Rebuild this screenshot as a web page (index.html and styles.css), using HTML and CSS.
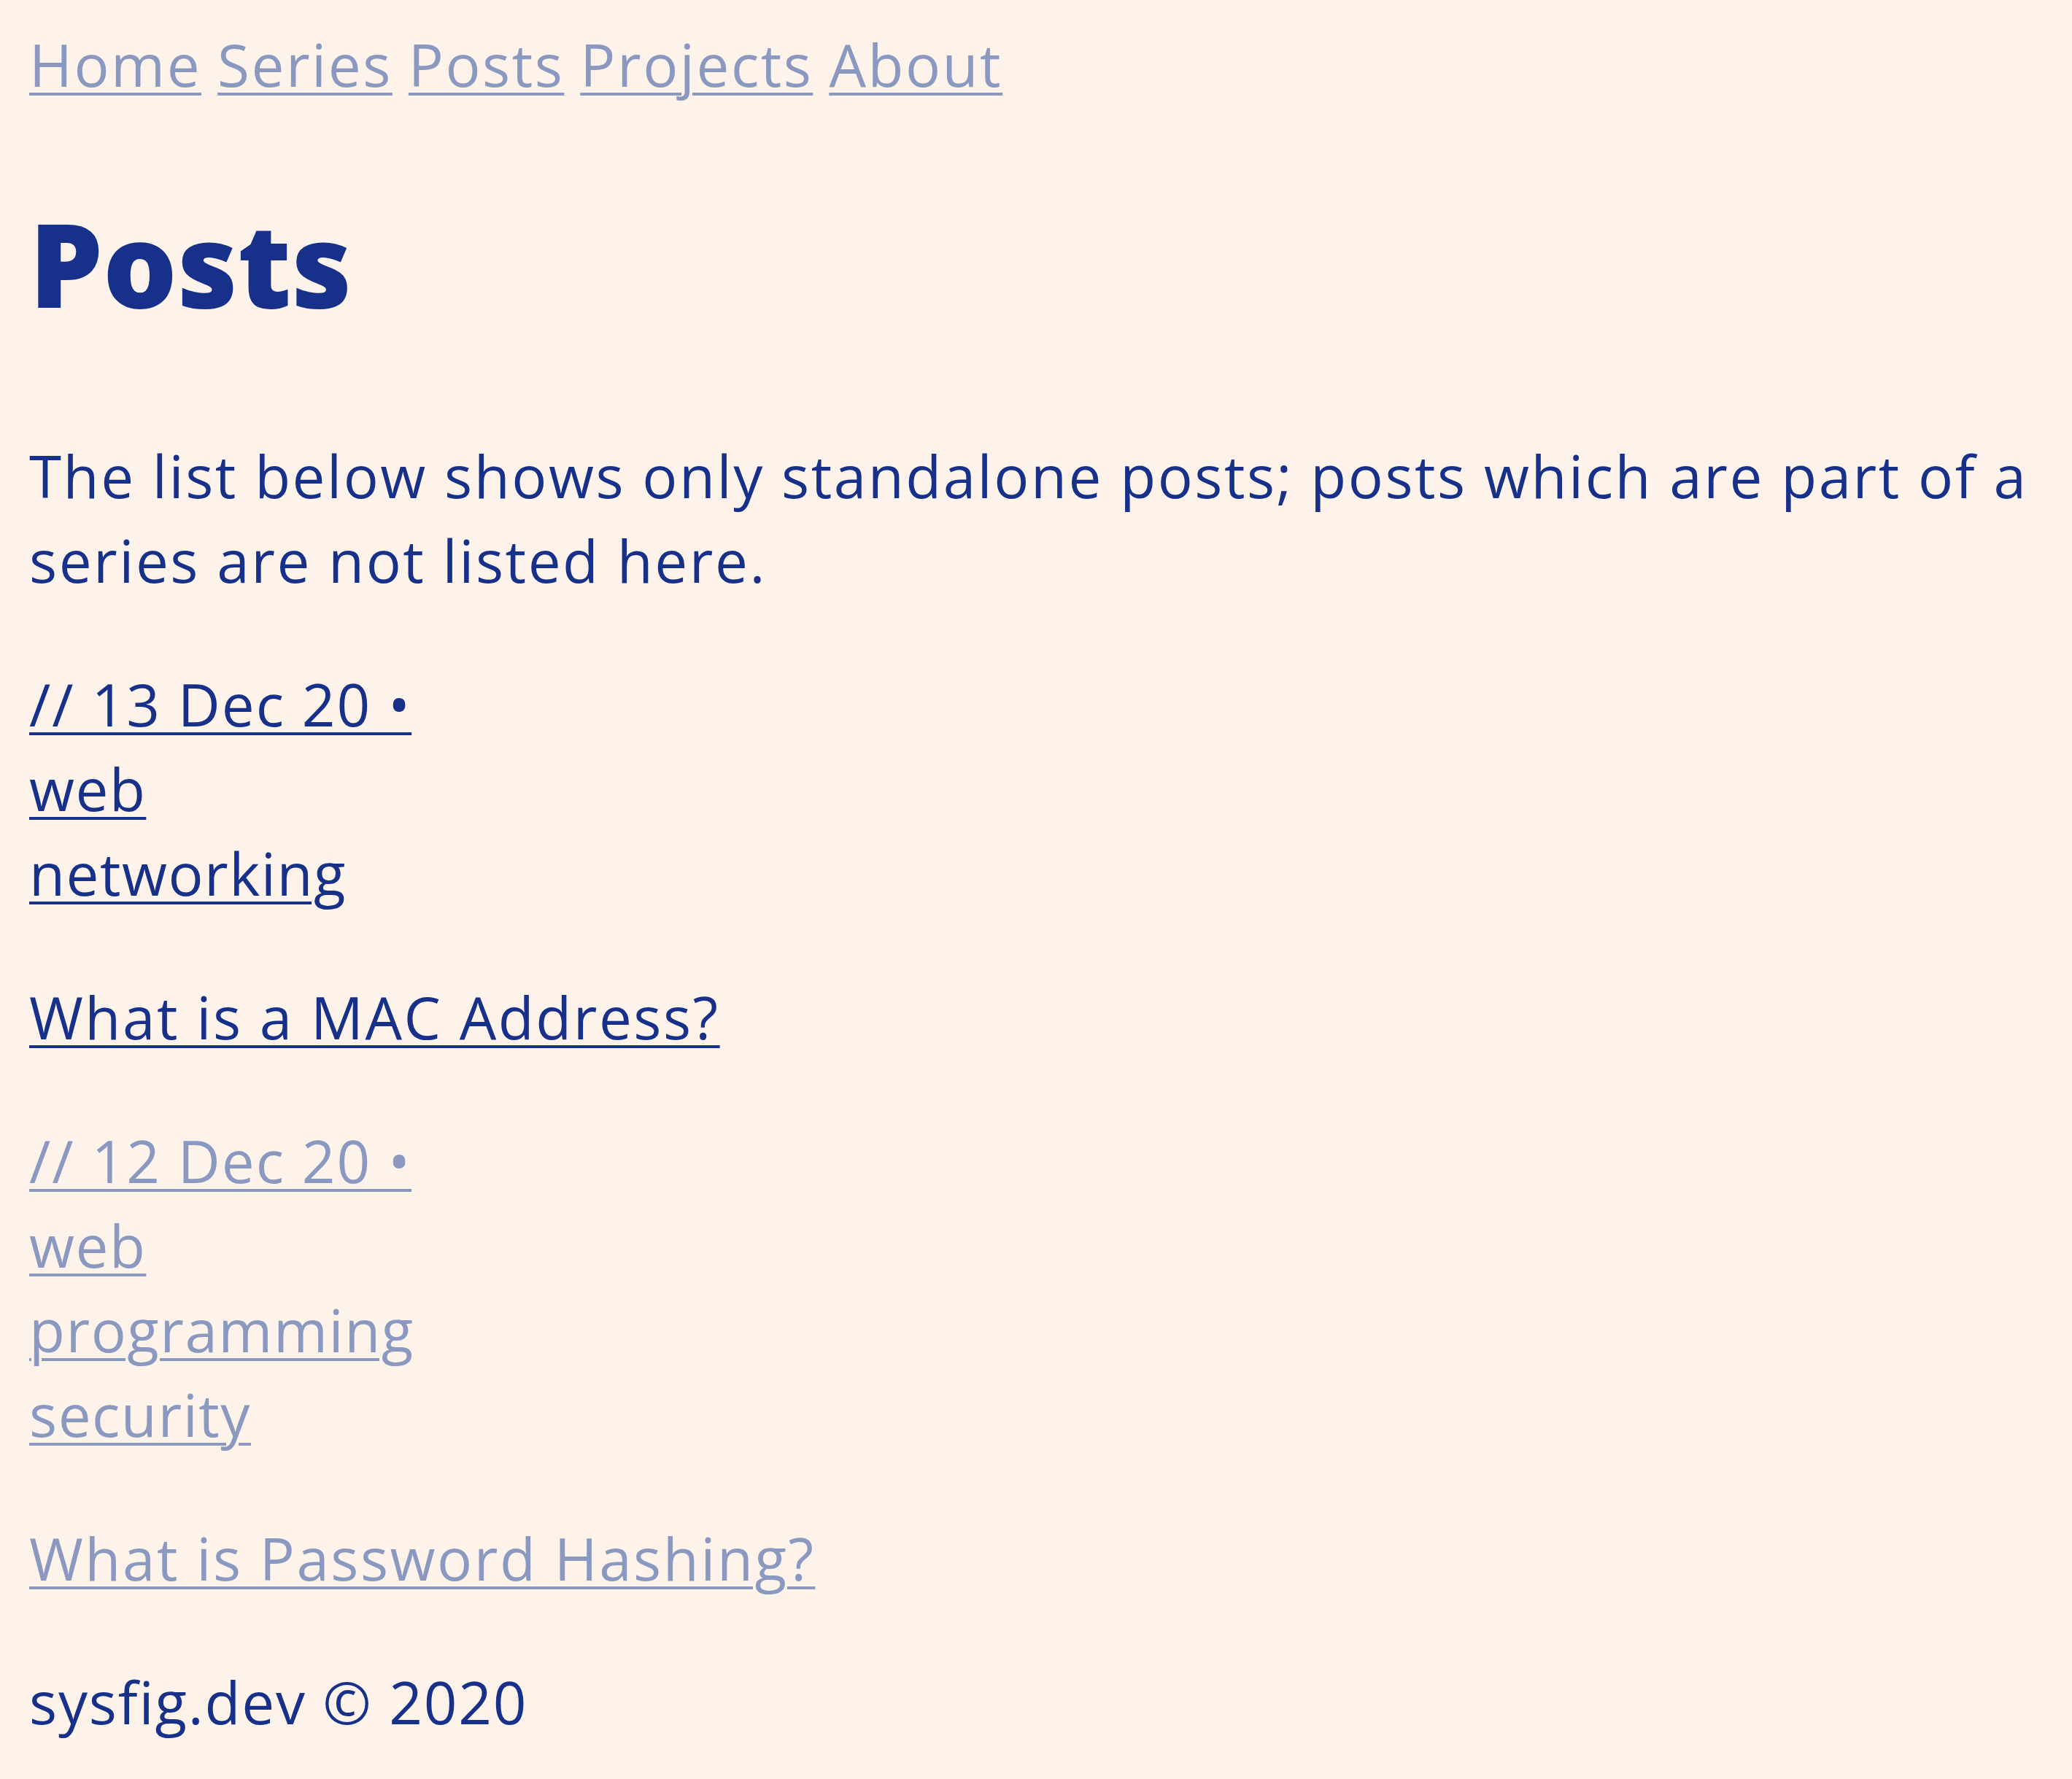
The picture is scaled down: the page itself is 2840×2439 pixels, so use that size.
FILE: index.html
```html
<!DOCTYPE html>
<html lang="en">
<head>
<meta charset="utf-8">
<title>Posts | sysfig.dev</title>
<link rel="stylesheet" href="styles.css">
</head>
<body>
<div class="page">
  <nav class="nav">
    <a class="nav-link" href="#">Home</a>
    <a class="nav-link" href="#">Series</a>
    <a class="nav-link" href="#">Posts</a>
    <a class="nav-link" href="#">Projects</a>
    <a class="nav-link" href="#">About</a>
  </nav>
  <main class="main">
    <h1 class="title">Posts</h1>
    <p class="intro">The list below shows only standalone posts; posts which are part of a series are not listed here.</p>
    <ul class="posts">
      <li class="post">
        <div class="meta">
          <a class="date" href="#">// 13 Dec 20 •</a>
          <a class="tag" href="#">web</a>
          <a class="tag" href="#">networking</a>
        </div>
        <a class="post-title" href="#">What is a MAC Address?</a>
      </li>
      <li class="post visited">
        <div class="meta">
          <a class="date" href="#">// 12 Dec 20 •</a>
          <a class="tag" href="#">web</a>
          <a class="tag" href="#">programming</a>
          <a class="tag" href="#">security</a>
        </div>
        <a class="post-title" href="#">What is Password Hashing?</a>
      </li>
    </ul>
  </main>
  <footer class="footer">sysfig.dev © 2020</footer>
</div>
</body>
</html>
```
FILE: styles.css
```css
html, body {
  margin: 0;
  padding: 0;
  background: #fdf3eb;
}

body {
  font-family: "Open Sans", "Noto Sans", sans-serif;
  font-size: 80px;
  line-height: 116px;
  letter-spacing: 2.5px;
  color: #17318a;
}

.page {
  padding: 30px 40px 40px 40px;
}

a {
  color: #17318a;
  text-decoration: underline;
  text-decoration-thickness: 4px;
  text-underline-offset: 8px;
}

.nav {
  display: flex;
  gap: 22px;
}

.nav-link {
  color: #8b98c0;
}

.title {
  margin: 118px 0 0 0;
  font-size: 160px;
  line-height: 192px;
  font-weight: 800;
  letter-spacing: 0;
}

.intro {
  margin: 138px 0 81px 0;
}

.posts {
  list-style: none;
  margin: 0;
  padding: 0;
}

.post {
  margin: 0 0 81px 0;
}

.meta {
  display: flex;
  flex-direction: column;
  align-items: flex-start;
}

.date {
  letter-spacing: 2px;
}

.tag {
  letter-spacing: 1.5px;
}

.post-title {
  display: inline-block;
  margin-top: 81px;
}

.visited a {
  color: #8b98c0;
}

.footer {
  margin: 0;
  letter-spacing: 1.8px;
}
```
